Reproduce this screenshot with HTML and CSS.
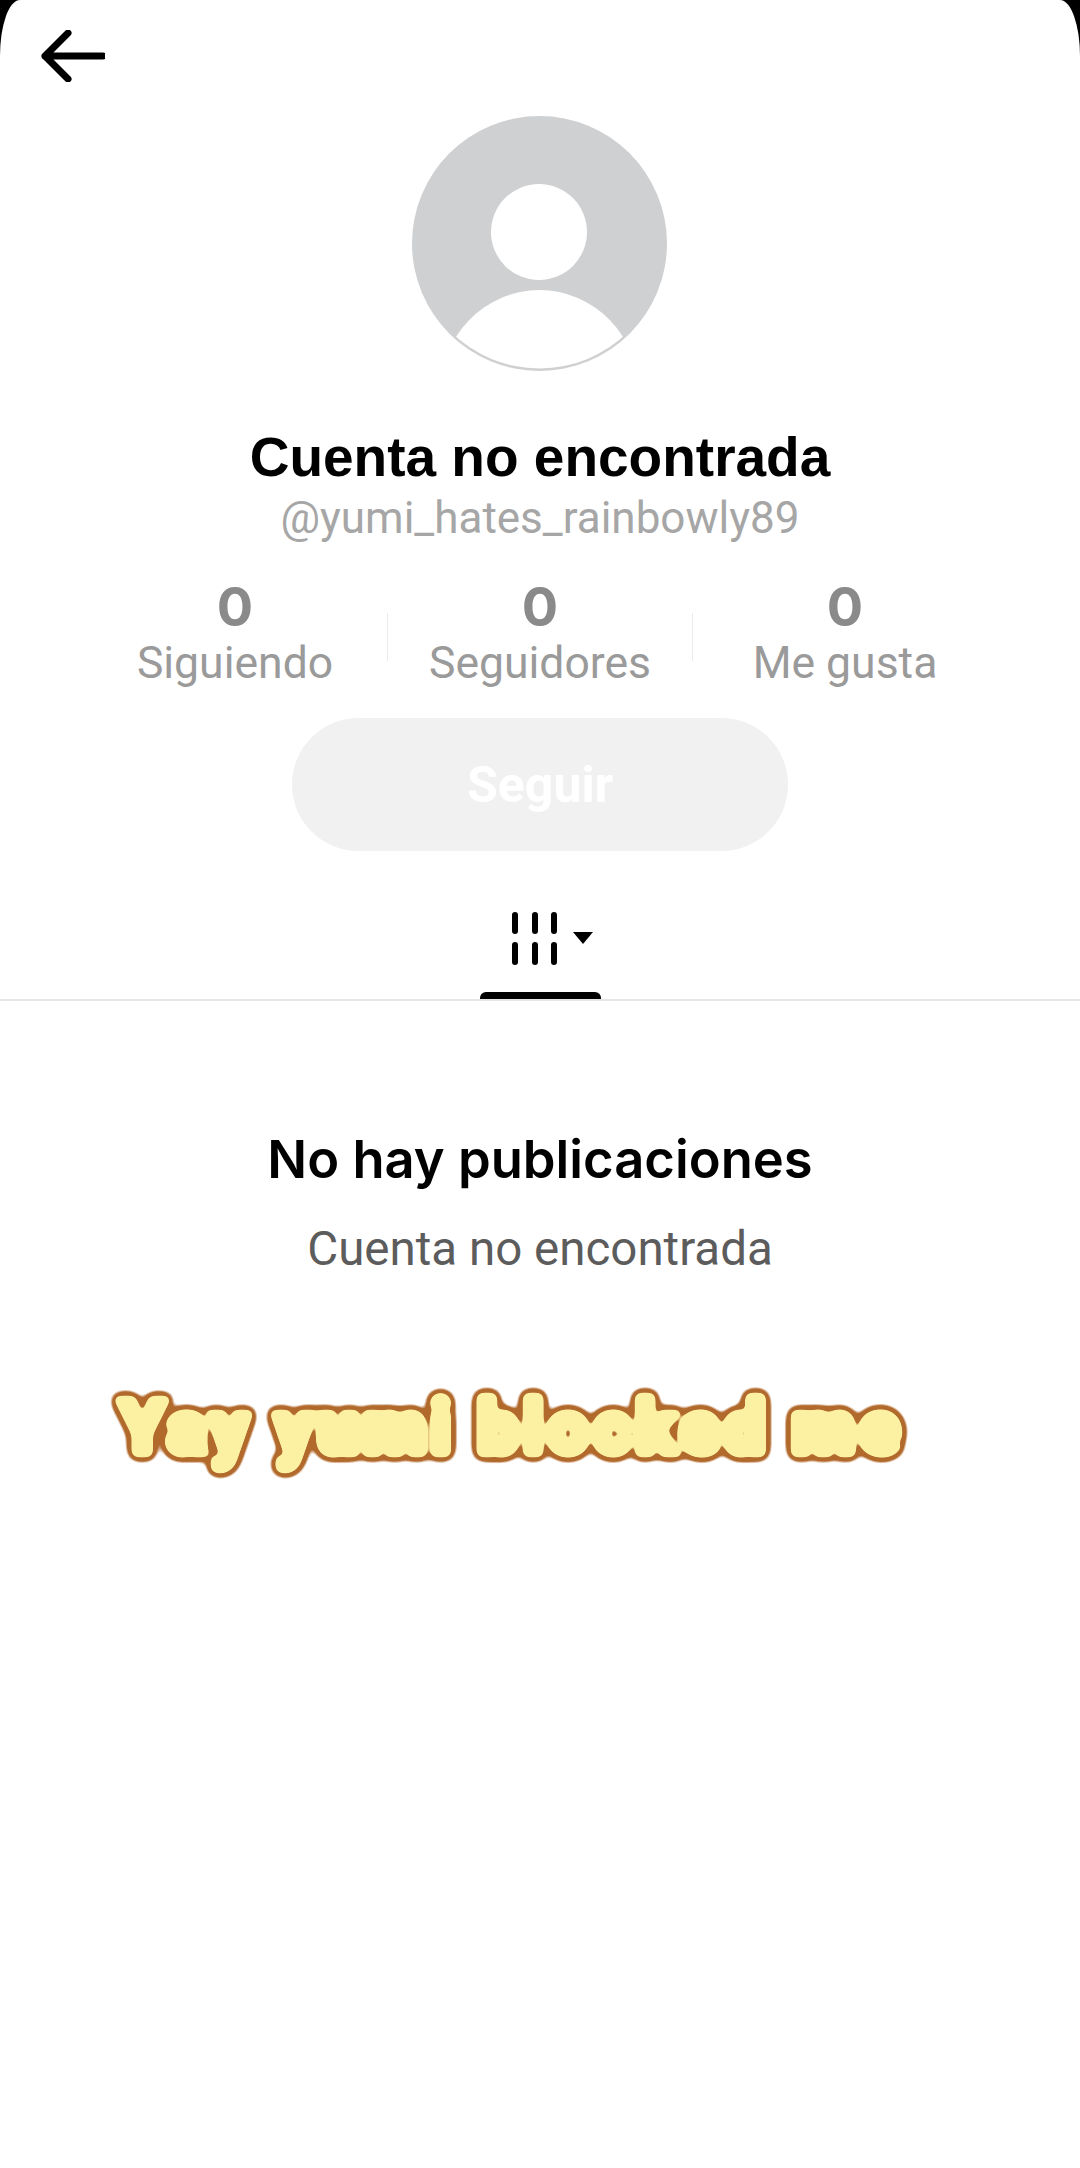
FILE: index.html
```html
<!DOCTYPE html>
<html lang="es">
<head>
  <meta charset="UTF-8" />
  <meta name="viewport" content="width=device-width, initial-scale=1.0" />
  <title>Cuenta no encontrada</title>
  <link rel="stylesheet" href="styles.css">
</head>
<body>
  <svg class="filter-defs" width="0" height="0" aria-hidden="true">
    <defs>
      <!-- rounds the letters out into a fat sticker with a brown edge -->
      <filter id="bubble" x="-5%" y="-40%" width="110%" height="180%" color-interpolation-filters="sRGB">
        <feGaussianBlur in="SourceAlpha" stdDeviation="3" result="soft" />
        <feComponentTransfer in="soft" result="inner">
          <feFuncA type="linear" slope="12" intercept="-3" />
        </feComponentTransfer>
        <feGaussianBlur in="SourceAlpha" stdDeviation="6" result="softer" />
        <feComponentTransfer in="softer" result="outer">
          <feFuncA type="linear" slope="14" intercept="-1" />
        </feComponentTransfer>
        <feFlood flood-color="#fcf1a2" />
        <feComposite in2="inner" operator="in" result="fill" />
        <feFlood flood-color="#b2692c" />
        <feComposite in2="outer" operator="in" result="edge" />
        <feMerge>
          <feMergeNode in="edge" />
          <feMergeNode in="fill" />
        </feMerge>
      </filter>
      <clipPath id="avatarClip">
        <circle cx="127.500" cy="127" r="125.500" />
      </clipPath>
    </defs>
  </svg>

  <div class="page">
    <header class="top-bar">
      <svg class="back-icon" viewBox="0 0 64 52" width="64" height="52">
        <path d="M62 26H4M27 3L4 26L27 49" fill="none" stroke="#000" stroke-width="7" stroke-linecap="round" stroke-linejoin="round" />
      </svg>
    </header>

    <svg class="avatar" viewBox="0 0 255 255" width="255" height="255">
      <circle cx="127.500" cy="127.500" r="127.500" fill="#cfd0d2" />
      <circle cx="127" cy="116" r="48" fill="#fff" />
      <ellipse cx="127.500" cy="278" rx="100" ry="104" fill="#fff" clip-path="url(#avatarClip)" />
    </svg>

    <h1 class="title">Cuenta no encontrada</h1>
    <p class="handle">@yumi_hates_rainbowly89</p>

    <div class="stats">
      <div class="stat">
        <span class="stat-num">0</span>
        <span class="stat-label">Siguiendo</span>
      </div>
      <div class="stat-sep"></div>
      <div class="stat">
        <span class="stat-num">0</span>
        <span class="stat-label">Seguidores</span>
      </div>
      <div class="stat-sep"></div>
      <div class="stat">
        <span class="stat-num">0</span>
        <span class="stat-label">Me gusta</span>
      </div>
    </div>

    <button type="button" class="follow-btn">Seguir</button>

    <nav class="tabs">
      <div class="tab">
        <svg class="tab-icon" viewBox="0 0 90 56" width="90" height="56">
          <path d="M5 4V20M25 4V20M44 4V20M5 34V51M25 34V51M44 34V51" fill="none" stroke="#000" stroke-width="6" stroke-linecap="round" />
          <path d="M63 21H83L73 33Z" fill="#000" />
        </svg>
        <div class="tab-line"></div>
      </div>
    </nav>

    <section class="empty">
      <h2 class="empty-title">No hay publicaciones</h2>
      <p class="empty-sub">Cuenta no encontrada</p>
    </section>

    <p class="sticker">Yay yumi blocked me</p>
  </div>
</body>
</html>
```

FILE: styles.css
```css
* {
  box-sizing: border-box;
}

html,
body {
  margin: 0;
  background: #000;
}

body {
  font-family: Roboto, "Liberation Sans", sans-serif;
  color: #000;
}

.filter-defs {
  display: block;
  height: 0;
}

.page {
  width: 1080px;
  height: 2168px;
  background: #fff;
  border-top-left-radius: 20px 56px;
  border-top-right-radius: 20px 56px;
  text-align: center;
  overflow: hidden;
}

.top-bar {
  display: flex;
  height: 116px;
  padding: 30px 0 0 41px;
}

.avatar {
  display: block;
  margin: 0 auto;
  transform: translateX(-1px);
}

.title {
  margin: 58px 0 0;
  font-family: "Liberation Sans", Arial, sans-serif;
  font-size: 55px;
  line-height: 56px;
  font-weight: 700;
}

.handle {
  margin: 10px 0 0;
  font-size: 44px;
  line-height: 46px;
  color: #a6a6a6;
}

.stats {
  display: flex;
  align-items: center;
  justify-content: center;
  margin-top: 38px;
}

.stat {
  display: flex;
  flex-direction: column;
  align-items: center;
  width: 304px;
}

.stat-num {
  font-family: Inter, sans-serif;
  font-size: 54px;
  line-height: 56px;
  font-weight: 700;
  color: #8a8a8a;
}

.stat-label {
  margin-top: 3px;
  font-size: 44.500px;
  line-height: 50px;
  color: #9a9a9a;
}

.stat-sep {
  width: 1px;
  height: 48px;
  margin-top: 6px;
  background: #ececec;
}

.follow-btn {
  display: block;
  width: 496px;
  height: 133px;
  margin: 30px auto 0;
  border: none;
  border-radius: 67px;
  background: #f1f1f2;
  color: #fff;
  font-family: Roboto, sans-serif;
  font-size: 50px;
  font-weight: 700;
}

.tabs {
  display: flex;
  justify-content: center;
  height: 150px;
  padding-top: 60px;
  border-bottom: 2px solid #e6e6e6;
}

.tab {
  display: flex;
  flex-direction: column;
  width: 121px;
}

.tab-icon {
  display: block;
  margin-left: 30px;
}

.tab-line {
  width: 121px;
  height: 7px;
  margin-top: 25px;
  background: #000;
  border-radius: 6px 6px 0 0;
}

.empty {
  padding-top: 130px;
}

.empty-title {
  margin: 0;
  font-family: Inter, sans-serif;
  font-size: 52.500px;
  line-height: 56px;
  font-weight: 600;
}

.empty-sub {
  margin: 37px 0 0;
  font-size: 47.500px;
  line-height: 50px;
  color: #5c5c5c;
}

.sticker {
  margin: 109px 0 0;
  padding-left: 119px;
  font-family: Roboto, sans-serif;
  font-size: 74px;
  line-height: 90px;
  font-weight: 900;
  letter-spacing: 4px;
  white-space: nowrap;
  text-align: left;
  -webkit-text-stroke: 5px #000;
  filter: url(#bubble);
}
```
